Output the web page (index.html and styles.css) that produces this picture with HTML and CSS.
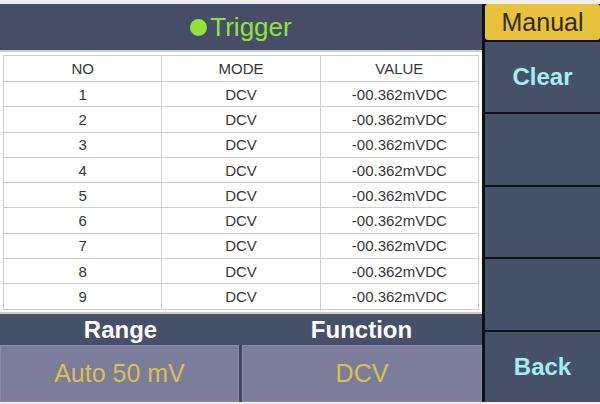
FILE: index.html
```html
<!DOCTYPE html>
<html>
<head>
<meta charset="utf-8">
<link rel="stylesheet" href="styles.css">
</head>
<body>
<div class="screen">
  <div class="main">
    <div class="header"><span class="dot"></span><span class="title">Trigger</span></div>
    <div class="table-area">
      <table class="log">
        <tr><td>NO</td><td>MODE</td><td>VALUE</td></tr>
        <tr><td>1</td><td>DCV</td><td>-00.362mVDC</td></tr>
        <tr><td>2</td><td>DCV</td><td>-00.362mVDC</td></tr>
        <tr><td>3</td><td>DCV</td><td>-00.362mVDC</td></tr>
        <tr><td>4</td><td>DCV</td><td>-00.362mVDC</td></tr>
        <tr><td>5</td><td>DCV</td><td>-00.362mVDC</td></tr>
        <tr><td>6</td><td>DCV</td><td>-00.362mVDC</td></tr>
        <tr><td>7</td><td>DCV</td><td>-00.362mVDC</td></tr>
        <tr><td>8</td><td>DCV</td><td>-00.362mVDC</td></tr>
        <tr><td>9</td><td>DCV</td><td>-00.362mVDC</td></tr>
      </table>
    </div>
    <div class="labels"><div class="label">Range</div><div class="label">Function</div></div>
    <div class="values"><div class="val">Auto 50 mV</div><div class="val">DCV</div></div>
  </div>
  <div class="side">
    <div class="btn manual">Manual</div>
    <div class="btn">Clear</div>
    <div class="btn"></div>
    <div class="btn"></div>
    <div class="btn"></div>
    <div class="btn">Back</div>
  </div>
</div>
</body>
</html>
```
FILE: styles.css
```css
* { box-sizing: border-box; }
html, body { margin: 0; padding: 0; }
body {
  background: #efefef;
  font-family: "Liberation Sans", Arial, sans-serif;
}
.screen {
  width: 600px;
  height: 404px;
  padding: 4px 0 2px 0;
  display: flex;
}
.main {
  width: 482px;
  display: flex;
  flex-direction: column;
}
.header {
  height: 46px;
  background: #464e67;
  display: flex;
  align-items: center;
  justify-content: center;
  gap: 3px;
}
.dot {
  width: 17px;
  height: 17px;
  border-radius: 50%;
  background: #92e23c;
  margin-top: 1px;
}
.title {
  color: #92e23c;
  font-size: 26px;
  line-height: 1;
}
.table-area {
  height: 262px;
  background: #fff;
  border-top: 2px solid #c9cbd0;
  padding: 3px 3px 0 3px;
}
.log {
  width: 476px;
  border-collapse: collapse;
  border: 1px solid #151515;
  table-layout: fixed;
}
.log td {
  height: 25.3px;
  padding: 0;
  text-align: center;
  font-size: 15px;
  color: #363636;
  border: 1px solid #cfcfcf;
}
.log tr:first-child td { height: 26px; }
.labels {
  height: 33px;
  background: #465069;
  display: grid;
  grid-template-columns: 1fr 1fr;
  border-top: 2px solid #c9cbd0;
}
.label {
  color: #ffffff;
  font-weight: bold;
  font-size: 24px;
  display: flex;
  align-items: center;
  justify-content: center;
}
.values {
  flex: 1;
  background: #3f4760;
  display: grid;
  grid-template-columns: 239px 1fr;
  gap: 3px;
}
.val {
  background: #7b7d9b;
  border: 1px solid #8a8ca9;
  color: #d9c150;
  font-size: 25px;
  display: flex;
  align-items: center;
  justify-content: center;
}
.side {
  flex: 1;
  background: #0f1018;
  padding-left: 3px;
  display: flex;
  flex-direction: column;
  gap: 2px;
}
.btn {
  flex: 1;
  background: #465068;
  display: flex;
  align-items: center;
  justify-content: center;
  color: #a4edf5;
  font-weight: bold;
  font-size: 24px;
}
.manual {
  flex: 0 0 36px;
  background: #e9c23c;
  border-radius: 3px;
  color: #2e2a1c;
  font-weight: normal;
  font-size: 25px;
}
```
